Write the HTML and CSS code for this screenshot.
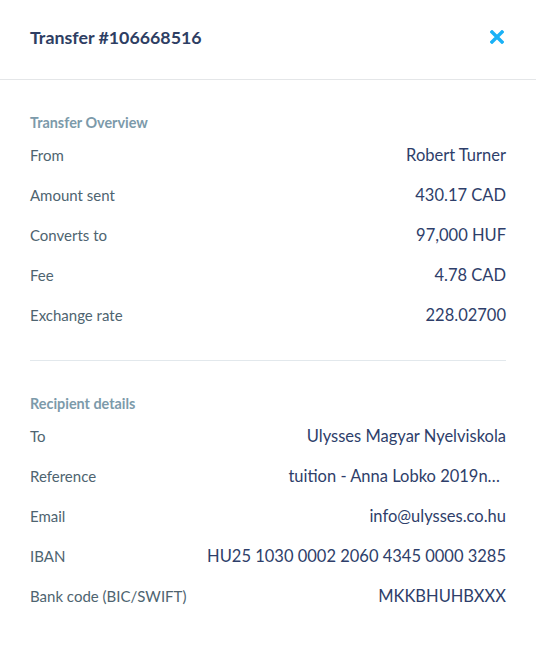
FILE: index.html
```html
<!DOCTYPE html>
<html>
<head>
<meta charset="utf-8">
<link rel="stylesheet" href="styles.css">
</head>
<body>
<div class="modal">
  <header class="modal-header">
    <h1 class="modal-title">Transfer #106668516</h1>
    <button class="close" aria-label="Close">
      <svg width="14" height="14" viewBox="0 0 14 14"><path d="M2 2L12 12M12 2L2 12" stroke="#1ab1f6" stroke-width="3.4" stroke-linecap="square"/></svg>
    </button>
  </header>
  <div class="modal-body">
    <section class="section">
      <h2 class="section-title">Transfer Overview</h2>
      <div class="row"><span class="label">From</span><span class="value">Robert Turner</span></div>
      <div class="row"><span class="label">Amount sent</span><span class="value">430.17 CAD</span></div>
      <div class="row"><span class="label">Converts to</span><span class="value">97,000 HUF</span></div>
      <div class="row"><span class="label">Fee</span><span class="value">4.78 CAD</span></div>
      <div class="row"><span class="label">Exchange rate</span><span class="value">228.02700</span></div>
    </section>
    <hr class="divider">
    <section class="section">
      <h2 class="section-title">Recipient details</h2>
      <div class="row"><span class="label">To</span><span class="value">Ulysses Magyar Nyelviskola</span></div>
      <div class="row"><span class="label">Reference</span><span class="value ref">tuition - Anna Lobko 2019n…</span></div>
      <div class="row"><span class="label">Email</span><span class="value">info@ulysses.co.hu</span></div>
      <div class="row"><span class="label">IBAN</span><span class="value">HU25 1030 0002 2060 4345 0000 3285</span></div>
      <div class="row"><span class="label">Bank code (BIC/SWIFT)</span><span class="value">MKKBHUHBXXX</span></div>
    </section>
  </div>
</div>
</body>
</html>
```
FILE: styles.css
```css
* { box-sizing: border-box; }
html, body { margin: 0; padding: 0; background: #fff; }
body { font-family: Lato, "Noto Sans", sans-serif; }
.modal { width: 536px; }
.modal-header {
  height: 80px;
  display: flex;
  align-items: center;
  justify-content: space-between;
  padding: 0 30px 6px;
  border-bottom: 1px solid #e4e6e8;
}
.modal-title {
  margin: 0;
  font-size: 17.8px;
  font-weight: 700;
  color: #2e3e63;
}
.close {
  border: 0;
  background: none;
  padding: 0;
  margin-right: 2px;
  width: 14px;
  height: 14px;
  display: flex;
}
.modal-body { padding: 34px 30px 0; }
.section-title {
  margin: 0 0 3px;
  font-size: 14.4px;
  font-weight: 700;
  color: #7c9aaa;
  line-height: 18px;
}
.row {
  display: flex;
  justify-content: space-between;
  align-items: center;
  height: 40px;
}
.label { font-size: 15px; color: #4e6470; }
.value { font-size: 16.5px; color: #2e3e6a; white-space: nowrap; }
.ref { padding-right: 6px; }
.divider {
  border: 0;
  border-top: 1px solid #e2e8ec;
  margin: 25px 0 34px;
}
```
